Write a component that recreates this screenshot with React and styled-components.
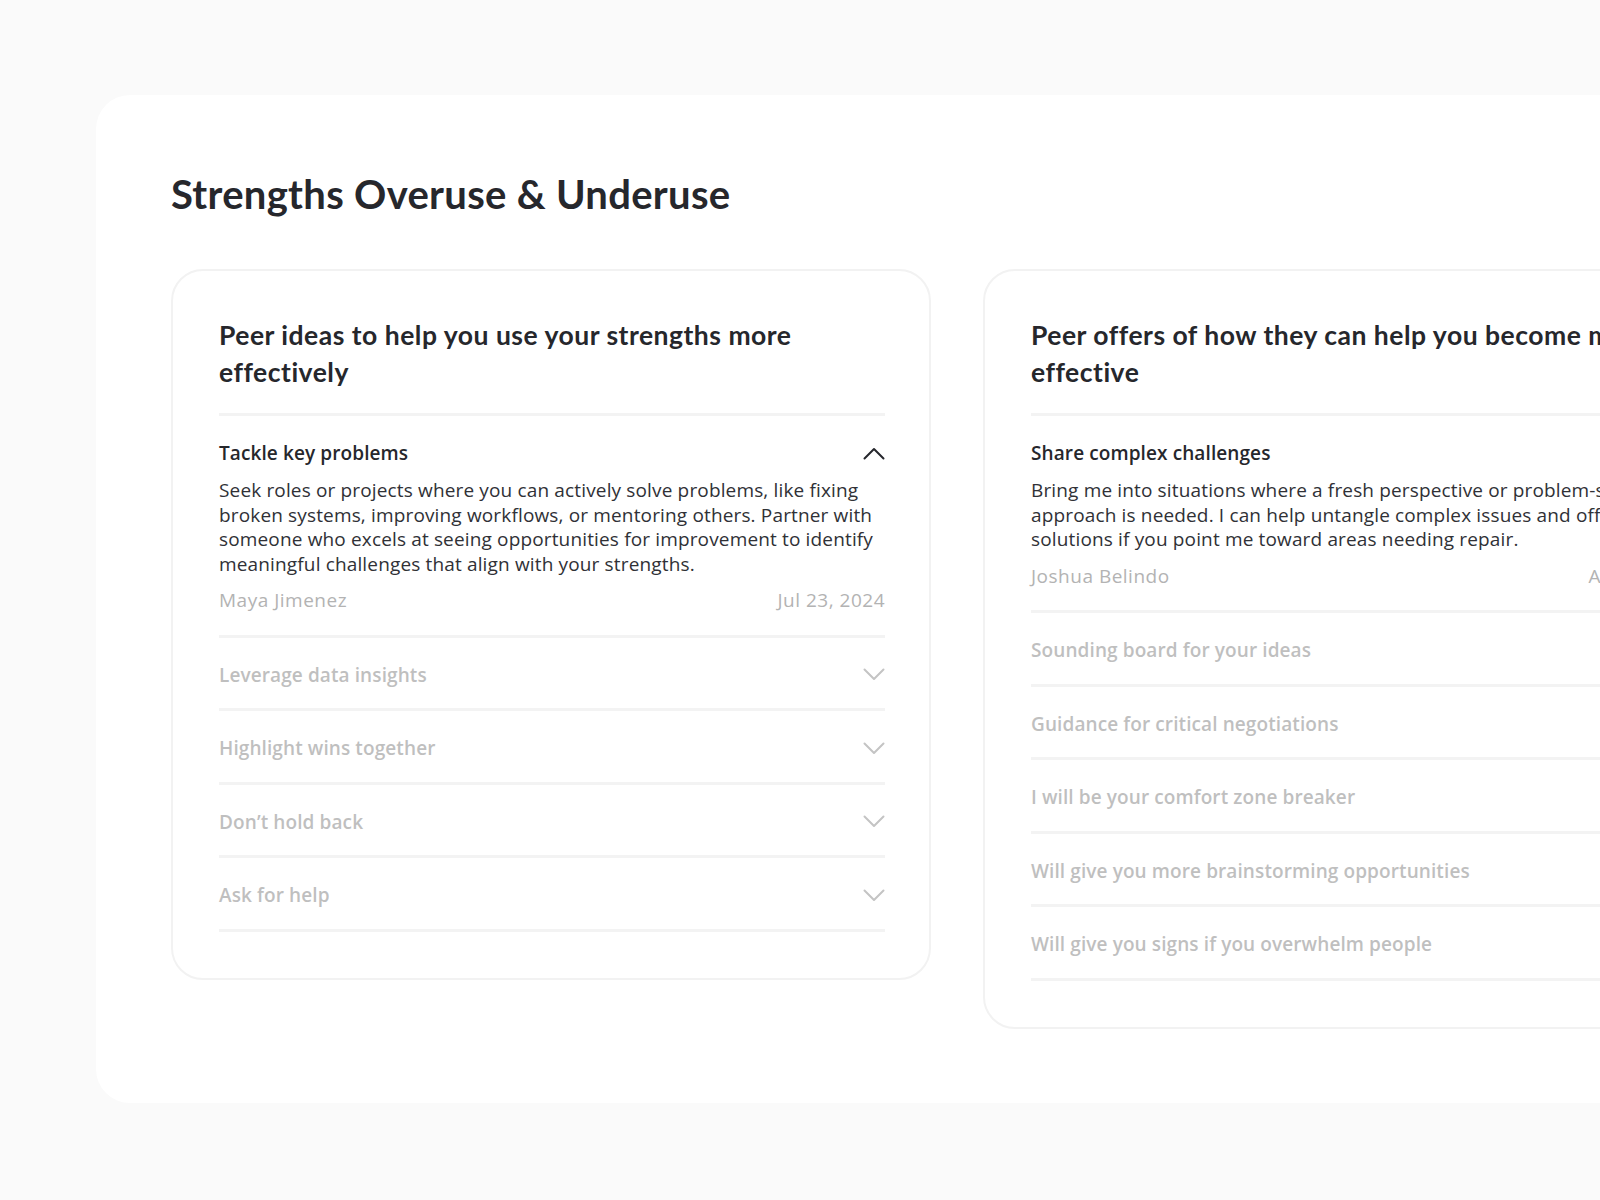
import React from "react";
import styled, { createGlobalStyle } from "styled-components";

const GlobalStyle = createGlobalStyle`
  html, body {
    margin: 0;
    padding: 0;
    background: #fafafa;
    overflow: hidden;
  }
  * {
    box-sizing: border-box;
  }
`;

const Page = styled.div`
  min-height: 100vh;
  padding: 95px 0 0 96px;
  font-family: "Open Sans", "Noto Sans", sans-serif;
`;

const Panel = styled.section`
  width: 1700px;
  height: 1008px;
  background: #ffffff;
  border-radius: 34px 0 0 34px;
  padding: 75px 0 0 75px;
`;

const Title = styled.h1`
  margin: 0 0 51px;
  font-family: "Lato", "Noto Sans", sans-serif;
  font-size: 40px;
  line-height: 48px;
  font-weight: 700;
  letter-spacing: 0.3px;
  color: #26272c;
`;

const Cards = styled.div`
  display: flex;
  align-items: flex-start;
  gap: 52px;
`;

const Card = styled.div`
  flex: 0 0 760px;
  border: 2px solid #f2f2f2;
  border-radius: 32px;
  padding: 46px 44px 46px 46px;
`;

const CardHeading = styled.h2`
  margin: 0;
  padding-bottom: 22px;
  border-bottom: 3px solid #f3f3f3;
  font-family: "Lato", "Noto Sans", sans-serif;
  font-size: 26.5px;
  line-height: 37px;
  font-weight: 700;
  letter-spacing: 0.5px;
  color: #26272c;
`;

const Item = styled.div`
  border-bottom: 3px solid #f3f3f3;
  padding: 26px 0 ${(p) => (p.$open ? "22.5px" : "22.5px")};
`;

const ItemHead = styled.div`
  display: flex;
  align-items: center;
  justify-content: space-between;
  height: 22px;
`;

const ItemTitle = styled.div`
  font-size: 19px;
  line-height: 22px;
  font-weight: 600;
  letter-spacing: 0.1px;
  color: ${(p) => (p.$open ? "#26272c" : "#bfbfbf")};
`;

const Body = styled.p`
  margin: 14px 0 0;
  font-size: 19px;
  line-height: 24.5px;
  letter-spacing: 0.15px;
  color: #303136;
`;

const Meta = styled.div`
  display: flex;
  justify-content: space-between;
  margin-top: 12px;
  font-size: 19px;
  line-height: 24px;
  letter-spacing: 0.5px;
  color: #b3b3b3;
`;

const Chevron = ({ up }) => (
  <svg width="22" height="13" viewBox="0 0 22 13" fill="none">
    <polyline
      points={up ? "1.5,11.5 11,2 20.5,11.5" : "1.5,1.5 11,11 20.5,1.5"}
      stroke={up ? "#26272c" : "#c4c4c4"}
      strokeWidth="2"
      strokeLinecap="round"
      strokeLinejoin="round"
    />
  </svg>
);

const ideas = {
  heading: "Peer ideas to help you use your strengths more effectively",
  open: {
    title: "Tackle key problems",
    body: "Seek roles or projects where you can actively solve problems, like fixing broken systems, improving workflows, or mentoring others. Partner with someone who excels at seeing opportunities for improvement to identify meaningful challenges that align with your strengths.",
    author: "Maya Jimenez",
    date: "Jul 23, 2024",
  },
  items: [
    "Leverage data insights",
    "Highlight wins together",
    "Don’t hold back",
    "Ask for help",
  ],
};

const offers = {
  heading: "Peer offers of how they can help you become more effective",
  open: {
    title: "Share complex challenges",
    body: "Bring me into situations where a fresh perspective or problem-solving approach is needed. I can help untangle complex issues and offer solutions if you point me toward areas needing repair.",
    author: "Joshua Belindo",
    date: "Aug 2, 2024",
  },
  items: [
    "Sounding board for your ideas",
    "Guidance for critical negotiations",
    "I will be your comfort zone breaker",
    "Will give you more brainstorming opportunities",
    "Will give you signs if you overwhelm people",
  ],
};

const FeedbackCard = ({ data }) => (
  <Card>
    <CardHeading>{data.heading}</CardHeading>
    <Item $open>
      <ItemHead>
        <ItemTitle $open>{data.open.title}</ItemTitle>
        <Chevron up />
      </ItemHead>
      <Body>{data.open.body}</Body>
      <Meta>
        <span>{data.open.author}</span>
        <span>{data.open.date}</span>
      </Meta>
    </Item>
    {data.items.map((label) => (
      <Item key={label}>
        <ItemHead>
          <ItemTitle>{label}</ItemTitle>
          <Chevron />
        </ItemHead>
      </Item>
    ))}
  </Card>
);

const App = () => (
  <Page>
    <GlobalStyle />
    <Panel>
      <Title>Strengths Overuse &amp; Underuse</Title>
      <Cards>
        <FeedbackCard data={ideas} />
        <FeedbackCard data={offers} />
      </Cards>
    </Panel>
  </Page>
);

export default App;
